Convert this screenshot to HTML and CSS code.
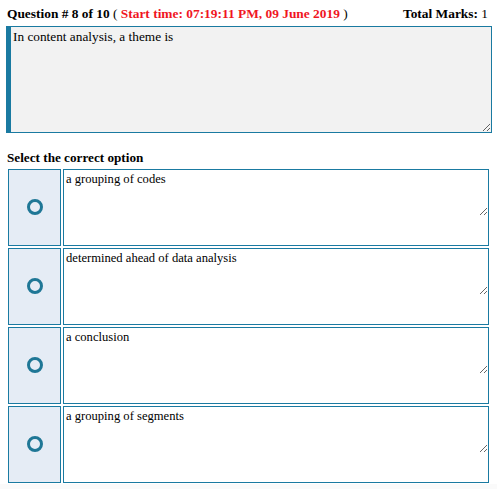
FILE: index.html
```html
<!DOCTYPE html>
<html>
<head>
<meta charset="utf-8">
<link rel="stylesheet" href="styles.css">
</head>
<body>
<div class="page">
  <div class="header">
    <div class="qnum"><b>Question # 8 of 10</b> ( <b class="time">Start time: 07:19:11 PM, 09 June 2019</b> )</div>
    <div class="marks"><b>Total Marks:</b> 1</div>
  </div>
  <textarea class="question" readonly>In content analysis, a theme is</textarea>
  <div class="prompt">Select the correct option</div>
  <div class="options">
    <div class="option">
      <div class="pick"><span class="radio"></span></div>
      <div class="answer"><textarea readonly>a grouping of codes</textarea></div>
    </div>
    <div class="option">
      <div class="pick"><span class="radio"></span></div>
      <div class="answer"><textarea readonly>determined ahead of data analysis</textarea></div>
    </div>
    <div class="option">
      <div class="pick"><span class="radio"></span></div>
      <div class="answer"><textarea readonly>a conclusion</textarea></div>
    </div>
    <div class="option">
      <div class="pick"><span class="radio"></span></div>
      <div class="answer"><textarea readonly>a grouping of segments</textarea></div>
    </div>
  </div>
</div>
<div class="footer"></div>
</body>
</html>
```
FILE: styles.css
```css
html, body {
  margin: 0;
  padding: 0;
  background: #ffffff;
}
body {
  font-family: "Liberation Serif", "Times New Roman", serif;
  color: #000;
}
.page {
  padding: 0 5px 0 6px;
}
.header {
  display: flex;
  justify-content: space-between;
  align-items: flex-end;
  height: 22px;
  font-size: 13.4px;
  padding: 0 4px 0 1px;
}
.header b { font-weight: bold; }
.marks { color: #000; }
.time { color: #f0161f; }
.question {
  display: block;
  box-sizing: border-box;
  width: 486px;
  height: 107px;
  margin: 4px 0 0 0;
  padding: 2px 2px;
  border: 1px solid #1a7aa1;
  border-left: 5px solid #1a7aa1;
  background: #f2f2f2;
  font: 13.3px "Liberation Serif", "Times New Roman", serif;
  color: #000;
  outline: none;
}
.prompt {
  font-weight: bold;
  font-size: 13.2px;
  margin: 17px 0 0 1px;
  height: 19px;
}
.options {
  display: flex;
  flex-direction: column;
  gap: 2px;
  padding: 0 0 0 2px;
}
.option {
  display: flex;
  gap: 2px;
  height: 77px;
}
.pick {
  box-sizing: border-box;
  width: 53px;
  border: 1px solid #1a7aa1;
  background: #e5ecf5;
  display: flex;
  align-items: center;
  justify-content: center;
}
.radio {
  box-sizing: border-box;
  width: 16px;
  height: 16px;
  border: 3px solid #1f7796;
  border-radius: 50%;
  margin: 0 0 2px 1px;
}
.answer {
  box-sizing: border-box;
  width: 426px;
  border: 1px solid #1a7aa1;
  background: #fff;
}
.answer textarea {
  display: block;
  box-sizing: border-box;
  width: 100%;
  height: 46px;
  margin: 0;
  padding: 2px 2px;
  border: none;
  background: #fff;
  font: 12.6px "Liberation Serif", "Times New Roman", serif;
  color: #000;
  outline: none;
}
.footer {
  margin-top: 1px;
  height: 20px;
  background: #fafafa;
}
```
